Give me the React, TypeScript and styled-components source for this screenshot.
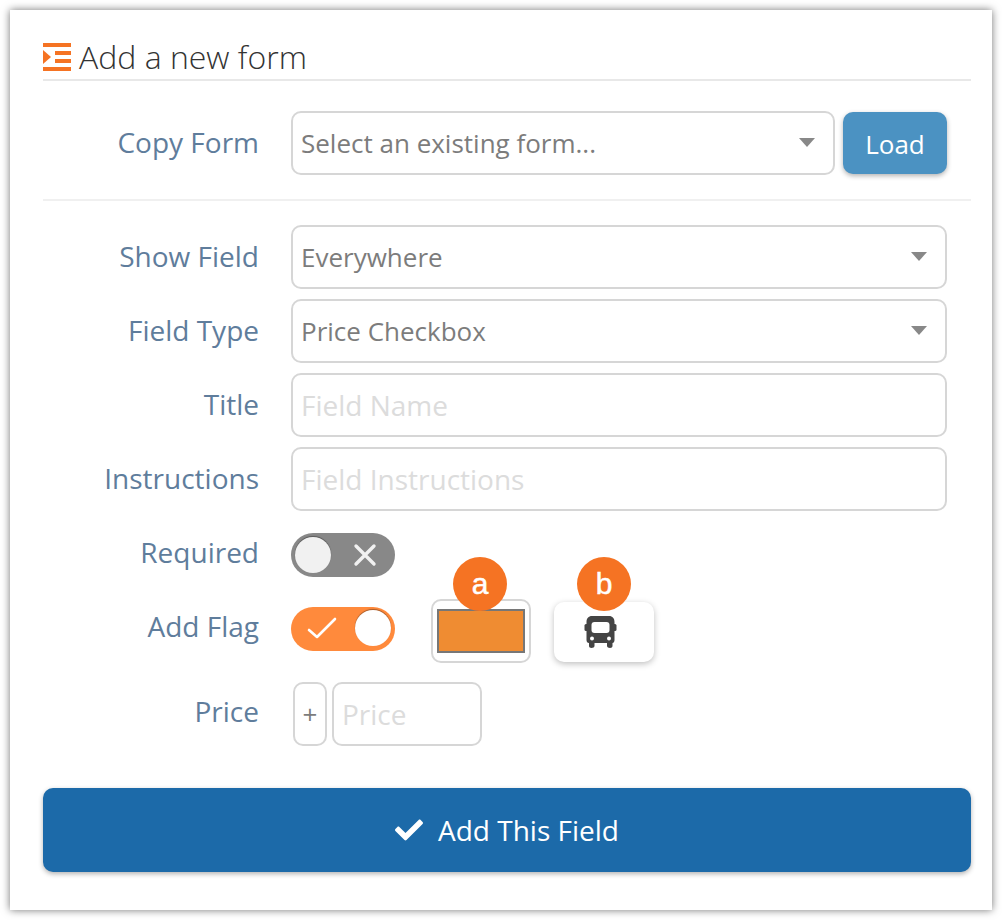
import styled, { createGlobalStyle } from 'styled-components'
import { FaCheck } from 'react-icons/fa'

const GlobalStyle = createGlobalStyle`
  html, body { margin: 0; padding: 0; background: #fff; }
  body { font-family: "Open Sans", "Liberation Sans", sans-serif; }
  * { box-sizing: border-box; }
`

const Page = styled.div`
  width: 1002px;
  height: 920px;
  padding: 10px;
`

const Card = styled.div`
  width: 982px;
  height: 900px;
  background: #fff;
  box-shadow: 0 0 8px rgba(0, 0, 0, 0.55);
  padding: 24px 21px 38px 33px;
`

const Heading = styled.h2`
  display: flex;
  align-items: center;
  gap: 8px;
  height: 47px;
  margin: 0 0 30px;
  border-bottom: 2px solid #e8e8e8;
  font-size: 32px;
  font-weight: 300;
  color: #333;
`

const Row = styled.div<{ $height?: number; $gap?: number }>`
  display: flex;
  align-items: center;
  min-height: ${(p) => p.$height ?? 64}px;
  margin-bottom: ${(p) => p.$gap ?? 10}px;
`

const Label = styled.label<{ $lift?: number }>`
  width: 216px;
  margin-right: 32px;
  padding-bottom: ${(p) => p.$lift ?? 2}px;
  flex: none;
  text-align: right;
  font-size: 28px;
  color: #5f7d9c;
`

const Controls = styled.div`
  display: flex;
  align-items: center;
  width: 656px;
`

const fieldBase = `
  height: 64px;
  border: 2px solid #d6d6d6;
  border-radius: 10px;
  background-color: #fff;
  font-family: "Open Sans", "Liberation Sans", sans-serif;
  color: #7c7c7c;
  padding: 0 8px;
  outline: none;
`

const Select = styled.select`
  ${fieldBase}
  flex: 1;
  min-width: 0;
  font-size: 26px;
  appearance: none;
`

const SelectWrap = styled.div`
  position: relative;
  flex: 1;
  display: flex;
`

const Caret = styled.span`
  position: absolute;
  right: 20px;
  top: 27px;
  width: 0;
  height: 0;
  border-left: 8px solid transparent;
  border-right: 8px solid transparent;
  border-top: 9px solid #888;
  pointer-events: none;
`

const Input = styled.input<{ $width?: number }>`
  ${fieldBase}
  width: ${(p) => (p.$width ? `${p.$width}px` : '100%')};
  font-size: 28px;
  &::placeholder { color: #dcdcdc; opacity: 1; }
`

const LoadButton = styled.button`
  flex: none;
  width: 104px;
  height: 62px;
  margin-left: 8px;
  padding: 2px 0 0;
  border: none;
  border-radius: 10px;
  background: #4b92c2;
  color: #fff;
  font-family: inherit;
  font-size: 26px;
  box-shadow: 0 2px 5px rgba(0, 0, 0, 0.3);
`

const Divider = styled.hr`
  border: none;
  border-top: 2px solid #f0f0f0;
  margin: 24px 0 24px;
  width: 928px;
`

const Toggle = styled.div<{ $on?: boolean }>`
  position: relative;
  flex: none;
  width: 104px;
  height: 44px;
  margin-bottom: ${(p) => (p.$on ? '4px' : '0')};
  border-radius: 22px;
  background: ${(p) => (p.$on ? '#ff8a3c' : '#888')};
`

const Knob = styled.span<{ $on?: boolean }>`
  position: absolute;
  top: ${(p) => (p.$on ? '3px' : '4px')};
  left: ${(p) => (p.$on ? '64px' : '4px')};
  width: 36px;
  height: 36px;
  border-radius: 50%;
  background: ${(p) => (p.$on ? '#fff' : '#f1f1f1')};
  box-shadow: 0 -1px 1px rgba(0, 0, 0, 0.35);
`

const ToggleIcon = styled.svg<{ $on?: boolean }>`
  position: absolute;
  top: 9px;
  left: ${(p) => (p.$on ? '16px' : '61px')};
`

const FlagBox = styled.div`
  position: relative;
  flex: none;
  display: flex;
  align-items: center;
  justify-content: center;
  width: 100px;
  height: 64px;
  margin-left: 36px;
  border: 2px solid #d6d6d6;
  border-radius: 10px;
`

const Swatch = styled.div`
  width: 88px;
  height: 44px;
  background: #ef8c32;
  border: 2px solid #777;
`

const IconCard = styled.div`
  position: relative;
  flex: none;
  display: flex;
  align-items: center;
  justify-content: center;
  width: 100px;
  height: 60px;
  margin: 2px 0 0 23px;
  padding-right: 7px;
  border-radius: 10px;
  background: #fff;
  box-shadow: 0 2px 6px rgba(0, 0, 0, 0.25);
`

const Badge = styled.span<{ $top: number; $nudge?: number }>`
  position: absolute;
  top: ${(p) => p.$top}px;
  left: calc(50% + ${(p) => p.$nudge ?? 0}px);
  transform: translateX(-50%);
  display: flex;
  align-items: center;
  justify-content: center;
  width: 54px;
  height: 54px;
  border-radius: 50%;
  background: #f57323;
  color: #fff;
  font-family: "Liberation Sans", Arial, sans-serif;
  font-size: 30px;
  -webkit-text-stroke: 0.5px #fff;
`

const PriceGroup = styled.div`
  display: flex;
  align-items: center;
  margin-left: 2px;
`

const PlusAddon = styled.div`
  ${fieldBase}
  flex: none;
  display: flex;
  align-items: center;
  justify-content: center;
  width: 34px;
  margin-right: 5px;
  padding: 0;
  font-size: 26px;
`

const SubmitButton = styled.button`
  display: flex;
  align-items: center;
  justify-content: center;
  gap: 15px;
  width: 928px;
  height: 84px;
  margin-top: 42px;
  border: none;
  border-radius: 10px;
  background: #1c6aa9;
  color: #fff;
  font-family: inherit;
  font-size: 28px;
  box-shadow: 0 2px 5px rgba(0, 0, 0, 0.3);
`

function BusIcon() {
  return (
    <svg width="33" height="32" viewBox="0 0 33 32">
      <path
        fill="#444"
        d="M8 0 H25 C28.500 0 30.500 2.500 30.500 6 V24 C30.500 26 29.500 27 28.500 27 V30 C28.500 31 27.500 32 26 32 C24.500 32 23 31 23 30 V27 H10.500 V30 C10.500 31 9 32 7.500 32 C6 32 5 31 5 30 V27 C3.500 27 2.500 26 2.500 24 V6 C2.500 2.500 4.500 0 8 0 Z"
      />
      <rect fill="#444" x="0.500" y="8" width="32" height="7" rx="1.500" />
      <rect fill="#fff" x="7.500" y="6" width="18" height="11" rx="3" />
      <circle fill="#fff" cx="8" cy="22.500" r="2" />
      <circle fill="#fff" cx="25" cy="22.500" r="2" />
    </svg>
  )
}

function App() {
  return (
    <Page>
      <GlobalStyle />
      <Card>
        <Heading>
          <svg width="28" height="28" viewBox="0 0 28 28" fill="#f57323">
            <rect x="0" y="0" width="28" height="4" />
            <rect x="12" y="8" width="16" height="4" />
            <rect x="12" y="16" width="16" height="4" />
            <rect x="0" y="24" width="28" height="4" />
            <polygon points="0,7 8,14 0,21" />
          </svg>
          Add a new form
        </Heading>

        <Row>
          <Label>Copy Form</Label>
          <Controls>
            <SelectWrap>
              <Select defaultValue="">
                <option value="">Select an existing form...</option>
              </Select>
              <Caret />
            </SelectWrap>
            <LoadButton>Load</LoadButton>
          </Controls>
        </Row>

        <Divider />

        <Row>
          <Label>Show Field</Label>
          <Controls>
            <SelectWrap>
              <Select defaultValue="everywhere">
                <option value="everywhere">Everywhere</option>
              </Select>
              <Caret />
            </SelectWrap>
          </Controls>
        </Row>
        <Row>
          <Label>Field Type</Label>
          <Controls>
            <SelectWrap>
              <Select defaultValue="price">
                <option value="price">Price Checkbox</option>
              </Select>
              <Caret />
            </SelectWrap>
          </Controls>
        </Row>
        <Row>
          <Label>Title</Label>
          <Controls>
            <Input placeholder="Field Name" />
          </Controls>
        </Row>
        <Row>
          <Label>Instructions</Label>
          <Controls>
            <Input placeholder="Field Instructions" />
          </Controls>
        </Row>
        <Row $height={68}>
          <Label $lift={6}>Required</Label>
          <Controls>
            <Toggle>
              <Knob />
              <ToggleIcon width="26" height="26" viewBox="0 0 26 26" fill="none" stroke="#f1f1f1" strokeWidth="3.4" strokeLinecap="round">
                <path d="M4 4 L22 22 M22 4 L4 22" />
              </ToggleIcon>
            </Toggle>
          </Controls>
        </Row>
        <Row $gap={19}>
          <Label $lift={10}>Add Flag</Label>
          <Controls>
            <Toggle $on>
              <ToggleIcon $on width="30" height="26" viewBox="0 0 30 26" fill="none" stroke="#fff" strokeWidth="2.600" strokeLinecap="round" strokeLinejoin="round">
                <path d="M2 14 L10 21 L28 3" />
              </ToggleIcon>
              <Knob $on />
            </Toggle>
            <FlagBox>
              <Swatch />
              <Badge $top={-44} $nudge={-1}>a</Badge>
            </FlagBox>
            <IconCard>
              <BusIcon />
              <Badge $top={-45}>b</Badge>
            </IconCard>
          </Controls>
        </Row>
        <Row $gap={0}>
          <Label $lift={6}>Price</Label>
          <Controls>
            <PriceGroup>
              <PlusAddon>+</PlusAddon>
              <Input $width={150} placeholder="Price" />
            </PriceGroup>
          </Controls>
        </Row>

        <SubmitButton>
          <FaCheck size={28} />
          Add This Field
        </SubmitButton>
      </Card>
    </Page>
  )
}

export default App
